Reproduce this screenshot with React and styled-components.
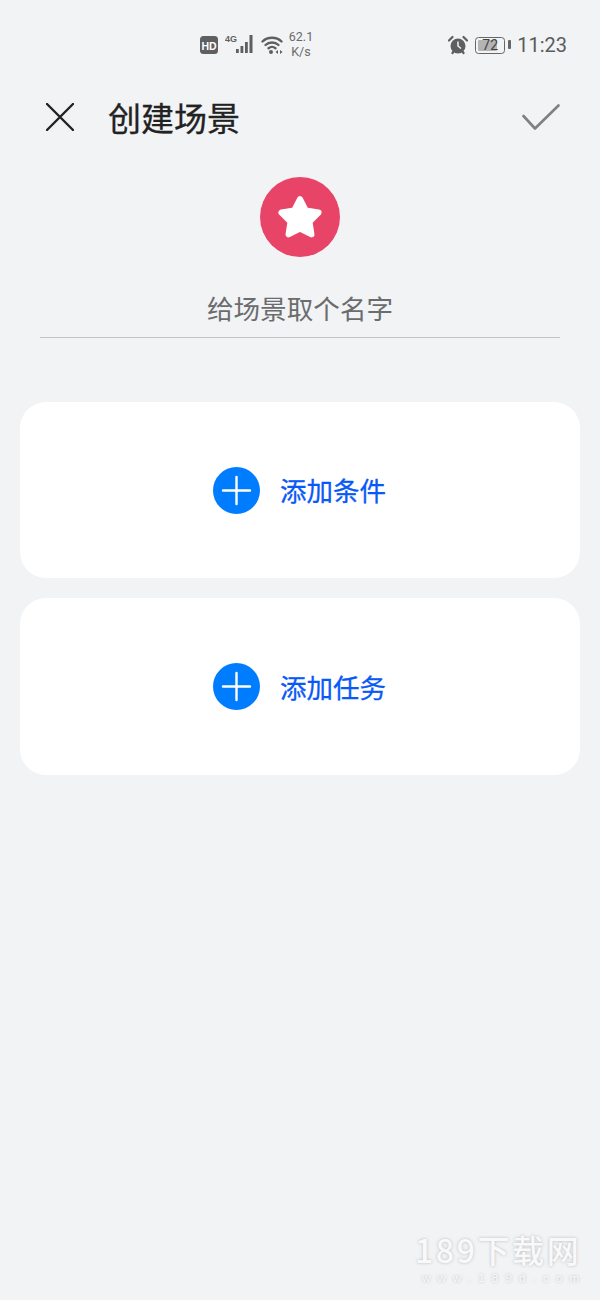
import React from "react";
import styled, { createGlobalStyle } from "styled-components";

const CJK = `"Noto Sans CJK SC", "Noto Sans", sans-serif`;

const Global = createGlobalStyle`
  html, body { margin: 0; padding: 0; background: #f1f3f5; }
  body { font-family: ${CJK}; }
`;

const Page = styled.div`
  position: relative;
  width: 600px;
  height: 1300px;
  overflow: hidden;
  background: #f1f3f5;
  display: flex;
  flex-direction: column;
`;

const StatusBar = styled.div`
  height: 28px;
  margin-top: 31px;
  padding: 0 33px 0 200px;
  display: flex;
  align-items: center;
  color: #5f5f5f;
`;
const StatusIcon = styled.svg`
  display: block;
  flex: none;
  margin-left: ${(p) => p.$ml || 0}px;
`;
const SignalIcon = styled(StatusIcon)`
  margin-top: -2px;
`;
const Speed = styled.div`
  margin-left: 5px;
  width: 26px;
  margin-top: -2px;
  font: 12.5px/15px "Roboto", sans-serif;
  text-align: center;
  color: #6a6a6a;
`;
const Spacer = styled.div`
  flex: 1;
`;
const Battery = styled.div`
  position: relative;
  margin-left: 7px;
  width: 30px;
  height: 17px;
  box-sizing: border-box;
  border: 1.5px solid #666;
  border-radius: 3.5px;
  padding: 2px;
  display: flex;
  &::after {
    content: "";
    position: absolute;
    right: -6.5px;
    top: 2.5px;
    width: 3px;
    height: 9px;
    background: #666;
    border-radius: 1px;
  }
`;
const BatteryFill = styled.div`
  width: 78%;
  background: #b4b4b4;
  border-radius: 1px;
`;
const BatteryLabel = styled.span`
  position: absolute;
  inset: 0;
  font: 14px/14px "Roboto", sans-serif;
  text-align: center;
  color: #444;
`;
const Clock = styled.div`
  margin-left: 12px;
  font: 20px/24px "Roboto", sans-serif;
  color: #5c5c5c;
`;

const Header = styled.header`
  height: 60px;
  margin-top: 28px;
  padding: 0 40px 0 46px;
  display: flex;
  align-items: center;
`;
const HeaderIcon = styled.svg`
  display: block;
  flex: none;
`;
const Title = styled.h1`
  margin: 0 0 0 34px;
  font: 400 33px/44px ${CJK};
  color: #222;
  -webkit-text-stroke: 0.3px #222;
`;

const Avatar = styled.div`
  width: 80px;
  height: 80px;
  margin: 30px auto 0;
  border-radius: 50%;
  background: #e84467;
  display: flex;
  align-items: center;
  justify-content: center;
`;
const NameRow = styled.div`
  margin: 29px 40px 0;
  height: 52px;
  box-sizing: border-box;
  border-bottom: 1px solid #c4c5c6;
  text-align: center;
  font: 400 26.6px/44px ${CJK};
  color: #6b6c6d;
`;

const Cards = styled.div`
  margin: 64px 20px 0;
  display: flex;
  flex-direction: column;
  gap: 20px;
`;
const Card = styled.div`
  height: ${(p) => p.$height}px;
  background: #fff;
  border-radius: 26px;
  display: flex;
  align-items: center;
  padding-left: 193px;
  gap: 20px;
`;
const CardLabel = styled.span`
  font: 400 26.5px/36px ${CJK};
  color: #0a59f7;
  -webkit-text-stroke: 0.3px #0a59f7;
`;

const Watermark = styled.div`
  position: absolute;
  right: 19px;
  top: 1227px;
  width: 166px;
  color: #f9f9fa;
  text-shadow: 0 0 3px rgba(130, 130, 130, 0.5);
`;
const WatermarkMain = styled.div`
  font: 500 32px/44px ${CJK};
  letter-spacing: 2.6px;
  white-space: nowrap;
`;
const WatermarkSub = styled.div`
  margin-left: 7px;
  font: 11.5px/14px "Liberation Sans", sans-serif;
  letter-spacing: 7.2px;
  white-space: nowrap;
`;

function PlusCircle() {
  return (
    <svg width="47" height="47" viewBox="0 0 47 47">
      <circle cx="23.500" cy="23.500" r="23.500" fill="#007dff" />
      <path d="M10 23.500H37M23.500 10V37" stroke="#fff" strokeWidth="2.400" strokeLinecap="round" />
    </svg>
  );
}

export default function App() {
  return (
    <Page>
      <Global />
      <StatusBar>
        <StatusIcon width="19" height="18" viewBox="0 0 19 18">
          <rect width="18" height="18" rx="3.500" fill="#5f5f5f" />
          <text x="9" y="13.500" textAnchor="middle" fill="#fff" fontFamily="Liberation Sans" fontWeight="700" fontSize="10.500">HD</text>
        </StatusIcon>
        <SignalIcon $ml={6} width="29" height="20" viewBox="0 0 29 20">
          <text x="0" y="8" fill="#5f5f5f" fontFamily="Liberation Sans" fontWeight="700" fontSize="9">4G</text>
          <g fill="#5f5f5f">
            <rect x="11" y="15" width="2.800" height="4" />
            <rect x="15.500" y="12" width="2.800" height="7" />
            <rect x="20" y="8" width="2.800" height="11" />
            <rect x="24.500" y="1" width="3" height="18" />
          </g>
        </SignalIcon>
        <StatusIcon $ml={7} width="22" height="20" viewBox="0 0 22 20">
          <g fill="none" stroke="#5f5f5f" strokeWidth="2.400" strokeLinecap="round">
            <path d="M1.500 6.500C6.500 1.500 15.500 1.500 20.500 6.500" />
            <path d="M4.500 10C8 6.700 14 6.700 17.500 10" />
            <path d="M7.500 13.200C9.500 11.700 12.500 11.700 14.500 13.200" />
          </g>
          <circle cx="10" cy="17" r="2" fill="#5f5f5f" />
          <path d="M14.500 17l2.500-2v4zM21.500 17l-2.500-2v4z" fill="#5f5f5f" />
        </StatusIcon>
        <Speed>62.1<br />K/s</Speed>
        <Spacer />
        <StatusIcon width="20" height="20" viewBox="0 0 20 20">
          <circle cx="10" cy="11" r="7.500" fill="#5f5f5f" />
          <path d="M1 5.500L4.500 2M19 5.500L15.500 2M4.500 18L6 16M15.500 18L14 16" stroke="#5f5f5f" strokeWidth="2.200" strokeLinecap="round" />
          <path d="M10 6.500V11L13 13.500" fill="none" stroke="#f1f3f5" strokeWidth="1.500" />
        </StatusIcon>
        <Battery><BatteryFill /><BatteryLabel>72</BatteryLabel></Battery>
        <Clock>11:23</Clock>
      </StatusBar>

      <Header>
        <HeaderIcon width="28" height="28" viewBox="0 0 28 28">
          <path d="M1 1L27 27M27 1L1 27" stroke="#222" strokeWidth="2.400" strokeLinecap="round" />
        </HeaderIcon>
        <Title>创建场景</Title>
        <Spacer />
        <HeaderIcon width="38" height="26" viewBox="0 0 38 26">
          <path d="M1.500 12L13 24.500L36.500 1.500" fill="none" stroke="#808080" strokeWidth="2.600" strokeLinecap="round" strokeLinejoin="round" />
        </HeaderIcon>
      </Header>

      <Avatar>
        <svg width="48" height="48" viewBox="0 0 48 48">
          <polygon
            transform="translate(24 25.600)"
            points="0,-19.500 5.880,-8.090 18.550,-6.030 9.510,3.090 11.460,15.780 0,10 -11.460,15.780 -9.510,3.090 -18.550,-6.030 -5.880,-8.090"
            fill="#fff"
            stroke="#fff"
            strokeWidth="6"
            strokeLinejoin="round"
          />
        </svg>
      </Avatar>

      <NameRow>给场景取个名字</NameRow>

      <Cards>
        <Card $height={176}><PlusCircle /><CardLabel>添加条件</CardLabel></Card>
        <Card $height={177}><PlusCircle /><CardLabel>添加任务</CardLabel></Card>
      </Cards>

      <Watermark>
        <WatermarkMain>189下载网</WatermarkMain>
        <WatermarkSub>www.189d.com</WatermarkSub>
      </Watermark>
    </Page>
  );
}
